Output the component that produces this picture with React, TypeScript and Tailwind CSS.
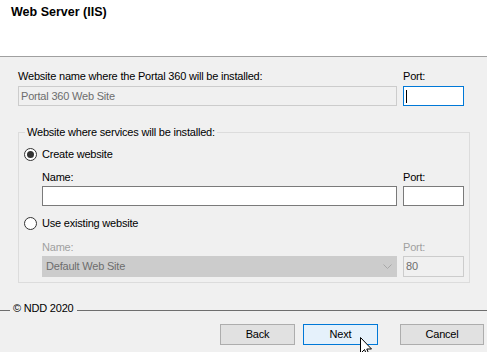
import React from 'react';

function Radio({ checked }: { checked?: boolean }) {
  return (
    <span className="flex h-[13px] w-[13px] shrink-0 items-center justify-center rounded-full border border-[#333333] bg-white">
      {checked && <span className="h-[7px] w-[7px] rounded-full bg-[#333333]" />}
    </span>
  );
}

function Button({ label, active, wide }: { label: string; active?: boolean; wide?: boolean }) {
  return (
    <div
      className={
        'flex h-[21px] items-center justify-center border text-[11px] leading-[13px] text-black ' +
        (wide ? 'w-[84px] ' : 'w-[75px] ') +
        (active ? 'border-[#0078d7] bg-[#e5f1fb]' : 'border-[#adadad] bg-[#e1e1e1]')
      }
    >
      {label}
    </div>
  );
}

export default function App() {
  return (
    <div className="relative flex h-[352px] w-[487px] flex-col overflow-hidden bg-[#f0f0f0] font-['Liberation_Sans',Arial,sans-serif] text-[11px] leading-[13px] tracking-[-0.2px] text-black">
      {/* header */}
      <div className="h-[57px] shrink-0 border-b border-[#a0a0a0] bg-white pl-[11px] pt-[5px]">
        <div className="text-[12.5px] font-bold leading-[15px] tracking-normal">Web Server (IIS)</div>
      </div>

      <div className="flex flex-col pl-[18px]">
        {/* website name + port */}
        <div className="mt-[13px] flex gap-[6px]">
          <div className="flex w-[379px] flex-col">
            <div>Website name where the Portal 360 will be installed:</div>
            <div className="mt-[3px] flex h-[20px] items-center border border-[#cccccc] bg-[#f0f0f0] pl-[2px] text-[#6d6d6d]">
              Portal 360 Web Site
            </div>
          </div>
          <div className="flex w-[61px] flex-col">
            <div>Port:</div>
            <div className="mt-[3px] flex h-[20px] items-center border border-[#0078d7] bg-white pl-[2px]">
              <span className="h-[13px] w-px bg-black" />
            </div>
          </div>
        </div>

        {/* services group */}
        <fieldset className="mt-[20px] h-[157px] w-[452px] border border-[#dcdcdc]">
          <legend className="ml-[6px] px-[2px]">Website where services will be installed:</legend>
          <div className="flex flex-col pl-[5px]">
            <div className="mt-[9px] flex h-[13px] items-center gap-[5px]">
              <Radio checked />
              <span>Create website</span>
            </div>
            <div className="ml-[18px] mt-[10px] flex gap-[6px]">
              <div className="flex w-[355px] flex-col">
                <div>Name:</div>
                <div className="mt-[2px] h-[20px] border border-[#7a7a7a] bg-white" />
              </div>
              <div className="flex w-[61px] flex-col">
                <div>Port:</div>
                <div className="mt-[2px] h-[20px] border border-[#7a7a7a] bg-white" />
              </div>
            </div>

            <div className="mt-[11px] flex h-[13px] items-center gap-[5px]">
              <Radio />
              <span>Use existing website</span>
            </div>
            <div className="ml-[18px] mt-[11px] flex gap-[6px]">
              <div className="flex w-[355px] flex-col">
                <div className="text-[#a0a0a0]">Name:</div>
                <div className="mt-[2px] flex h-[21px] items-center justify-between border border-[#cccccc] bg-[#cccccc] pl-[3px] pr-[4px] text-[#6d6d6d]">
                  <span>Default Web Site</span>
                  <svg width="9" height="5" viewBox="0 0 9 5" fill="none">
                    <path d="M0.5 0.5 L4.5 4.5 L8.5 0.5" stroke="#a8a8a8" strokeWidth="1" />
                  </svg>
                </div>
              </div>
              <div className="flex w-[61px] flex-col">
                <div className="text-[#a0a0a0]">Port:</div>
                <div className="mt-[2px] flex h-[21px] items-center border border-[#cccccc] bg-[#f0f0f0] pl-[2px] text-[#6d6d6d]">
                  80
                </div>
              </div>
            </div>
          </div>
        </fieldset>
      </div>

      {/* footer divider */}
      <div className="mt-[19px] flex h-[13px]">
        <div className="mt-[8px] h-px w-[10px] bg-[#6e6e6e]" />
        <div className="px-[3px]">© NDD 2020</div>
        <div className="mt-[8px] h-px flex-1 bg-[#6e6e6e]" />
      </div>

      {/* buttons */}
      <div className="mt-[9px] flex pl-[220px]">
        <Button label="Back" />
        <div className="ml-[8px]">
          <Button label="Next" active />
        </div>
        <div className="ml-[22px]">
          <Button label="Cancel" wide />
        </div>
      </div>

      {/* mouse pointer */}
      <svg className="absolute left-[360px] top-[337px]" width="13" height="20" viewBox="0 0 13 20">
        <path
          d="M0.5 0.5 L0.5 16.5 L4.5 12.5 L7.5 19.5 L9.5 18.5 L6.8 12 L11.5 12 Z"
          fill="white"
          stroke="black"
          strokeWidth="1"
        />
      </svg>
    </div>
  );
}
